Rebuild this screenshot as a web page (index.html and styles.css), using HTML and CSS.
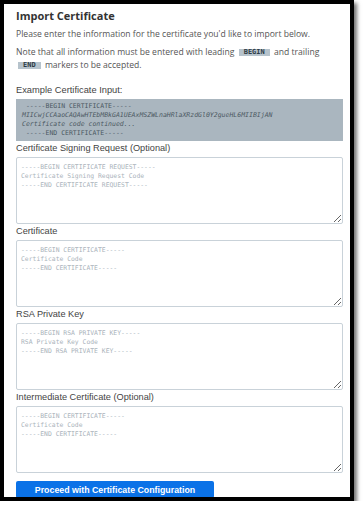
FILE: index.html
```html
<!DOCTYPE html>
<html lang="en">
<head>
  <meta charset="UTF-8">
  <meta name="viewport" content="width=device-width, initial-scale=1.0">
  <title>Import Certificate</title>
  <link rel="stylesheet" href="styles.css">
</head>
<body>
  <div class="frame">
    <h2>Import Certificate</h2>
    <p class="intro">Please enter the information for the certificate you'd like to import below.</p>
    <p class="intro">Note that all information must be entered with leading <code class="tag">BEGIN</code> and trailing <code class="tag">END</code> markers to be accepted.</p>

    <div class="example-label">Example Certificate Input:</div>
    <pre class="example"> -----BEGIN CERTIFICATE-----
<i>MIICwjCCAaoCAQAwHTEbMBkGA1UEAxMSZWLnaHRlaXRzdGl0Y2gueHL6MIIBIjAN</i>
<i>Certificate code continued...</i>
 -----END CERTIFICATE-----</pre>

    <form>
      <label for="csr">Certificate Signing Request (Optional)</label>
      <textarea id="csr" placeholder="-----BEGIN CERTIFICATE REQUEST-----&#10;Certificate Signing Request Code&#10;-----END CERTIFICATE REQUEST-----"></textarea>

      <label for="cert">Certificate</label>
      <textarea id="cert" placeholder="-----BEGIN CERTIFICATE-----&#10;Certificate Code&#10;-----END CERTIFICATE-----"></textarea>

      <label for="key">RSA Private Key</label>
      <textarea id="key" placeholder="-----BEGIN RSA PRIVATE KEY-----&#10;RSA Private Key Code&#10;-----END RSA PRIVATE KEY-----"></textarea>

      <label for="chain">Intermediate Certificate (Optional)</label>
      <textarea id="chain" placeholder="-----BEGIN CERTIFICATE-----&#10;Certificate Code&#10;-----END CERTIFICATE-----"></textarea>

      <button type="button">Proceed with Certificate Configuration</button>
    </form>
  </div>
</body>
</html>
```

FILE: styles.css
```css
    body {
      margin: 0;
      background: #ffffff;
      font-family: 'Open Sans', sans-serif;
      color: #555555;
    }

    .frame {
      box-sizing: border-box;
      width: 354px;
      height: 501px;
      border: 4px solid #000000;
      box-shadow: 3px 3px 4px rgba(0, 0, 0, 0.55);
      padding: 4px 7px 0 12px;
      overflow: hidden;
      background: #ffffff;
    }

    h2 {
      margin: 0 0 4px;
      font-size: 11px;
      line-height: 16px;
      font-weight: 700;
      color: #333333;
    }

    .intro {
      margin: 0 0 5px;
      font-size: 8.6px;
      line-height: 13px;
    }

    .tag {
      font-family: 'DejaVu Sans Mono', monospace;
      font-size: 7px;
      line-height: 7px;
      font-weight: bold;
      background-color: #b6c3cc;
      color: #2e3b45;
      padding: 0 5px;
      margin: 0 2px;
      display: inline-block;
      vertical-align: 1px;
    }

    .example-label {
      margin-top: 12px;
      font-family: 'Liberation Sans', Arial, sans-serif;
      font-size: 9.3px;
      line-height: 13px;
      color: #444444;
    }

    .example {
      margin: 2px 0 0;
      padding: 3px 6px;
      background-color: #aab6bf;
      font-family: 'DejaVu Sans Mono', monospace;
      font-size: 6.5px;
      line-height: 9px;
      color: #4b5862;
    }

    form {
      display: flex;
      flex-direction: column;
      align-items: flex-start;
    }

    label {
      font-family: 'Liberation Sans', Arial, sans-serif;
      font-size: 9.2px;
      line-height: 14px;
      color: #444444;
      margin-bottom: 2px;
    }

    textarea {
      box-sizing: border-box;
      width: 100%;
      height: 67px;
      margin: 0;
      padding: 5px 4px;
      border: 1px solid #c9d2d9;
      border-radius: 2px;
      font-family: 'DejaVu Sans Mono', monospace;
      font-size: 6.4px;
      line-height: 9px;
      color: #555555;
    }

    textarea::placeholder {
      color: #aab3bb;
    }

    button {
      margin-top: 8px;
      width: 198px;
      height: 17px;
      background-color: #0b72e7;
      color: #ffffff;
      border: none;
      border-radius: 2px;
      font-family: 'Liberation Sans', Arial, sans-serif;
      font-size: 8.8px;
      font-weight: 700;
      cursor: pointer;
    }
```
